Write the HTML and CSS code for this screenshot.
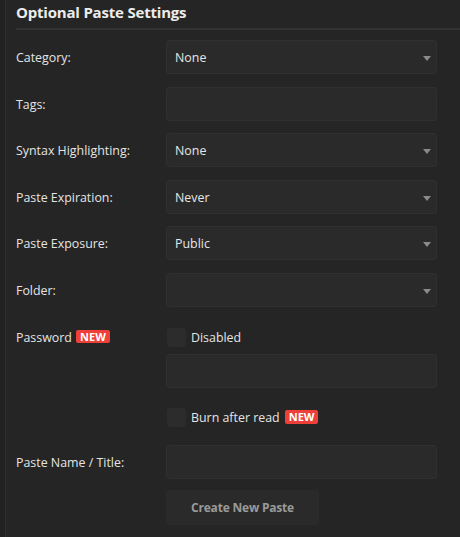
FILE: index.html
```html
<!DOCTYPE html>
<html>
<head>
<meta charset="utf-8">
<link rel="stylesheet" href="styles.css">
</head>
<body>
<div class="panel">
  <h2 class="title">Optional Paste Settings</h2>
  <div class="form">
    <div class="row">
      <label class="label">Category:</label>
      <div class="control select">None<span class="caret"></span></div>
    </div>
    <div class="row">
      <label class="label">Tags:</label>
      <div class="control"></div>
    </div>
    <div class="row">
      <label class="label">Syntax Highlighting:</label>
      <div class="control select">None<span class="caret"></span></div>
    </div>
    <div class="row">
      <label class="label">Paste Expiration:</label>
      <div class="control select">Never<span class="caret"></span></div>
    </div>
    <div class="row">
      <label class="label">Paste Exposure:</label>
      <div class="control select">Public<span class="caret"></span></div>
    </div>
    <div class="row">
      <label class="label">Folder:</label>
      <div class="control select"><span class="caret"></span></div>
    </div>
    <div class="row row-pw">
      <label class="label label-top">Password <span class="badge">NEW</span></label>
      <div class="stack">
        <div class="check"><span class="box"></span>Disabled</div>
        <div class="control pw"></div>
        <div class="check burn"><span class="box"></span>Burn after read<span class="badge">NEW</span></div>
      </div>
    </div>
    <div class="row row-name">
      <label class="label">Paste Name / Title:</label>
      <div class="control"></div>
    </div>
    <div class="row row-btn">
      <span></span>
      <button class="btn">Create New Paste</button>
    </div>
  </div>
</div>
</body>
</html>
```
FILE: styles.css
```css
html, body {
  margin: 0;
  padding: 0;
  height: 100%;
}
html { background: #222222; }
body {
  font-family: "Open Sans", "Noto Sans", sans-serif;
  font-size: 12.4px;
  color: #e4e4e4;
}
.panel {
  margin-left: 5px;
  border-left: 1px solid #2f2f2f;
  min-height: 537px;
  box-sizing: border-box;
  padding-left: 10px;
  background: #252525;
}
.title {
  margin: 0;
  padding: 1px 0 0 0;
  height: 27px;
  font-size: 15px;
  font-weight: 700;
  letter-spacing: -0.2px;
  color: #ececec;
  border-bottom: 2px solid #333333;
  line-height: 22px;
}
.form {
  padding-top: 10px;
  padding-right: 23px;
}
.row {
  display: grid;
  grid-template-columns: 150px 271px;
  align-items: center;
  margin-bottom: 12.5px;
}
.label {
  color: #e4e4e4;
  white-space: nowrap;
  padding-top: 1px;
}
.control {
  position: relative;
  height: 34px;
  box-sizing: border-box;
  border: 1px solid #303030;
  border-radius: 3px;
  background: #2a2a2a;
  padding-left: 8px;
  line-height: 33px;
  color: #e6e6e6;
}
.caret {
  position: absolute;
  right: 5px;
  top: 15px;
  width: 0;
  height: 0;
  border-left: 4px solid transparent;
  border-right: 4px solid transparent;
  border-top: 5px solid #8a8a8a;
}
.row-pw {
  align-items: start;
  margin-top: 21px;
}
.label-top {
  padding-top: 1px;
}
.badge {
  display: inline-block;
  background: #ee3f38;
  color: #ffffff;
  font-weight: 700;
  font-size: 11px;
  line-height: 13px;
  padding: 0 4px;
  border-radius: 2px;
  vertical-align: 1px;
  margin-left: 1px;
}
.stack {
  display: flex;
  flex-direction: column;
}
.check {
  display: flex;
  align-items: center;
  height: 19px;
  margin-left: 1px;
  color: #e4e4e4;
}
.check .box {
  width: 19px;
  height: 19px;
  background: #2c2c2c;
  border-radius: 3px;
  margin-right: 5px;
  flex: none;
}
.check .badge {
  margin-left: 5px;
  line-height: 14px;
  vertical-align: 0;
}
.pw {
  margin-top: 7px;
}
.burn {
  margin-top: 20px;
}
.row-name {
  margin-top: 18px;
  margin-bottom: 11px;
}
.btn {
  width: 153px;
  height: 35px;
  background: #2a2a2a;
  border: none;
  border-radius: 3px;
  color: #9a9a9a;
  font-family: "Open Sans", "Noto Sans", sans-serif;
  font-size: 12px;
  font-weight: 700;
  letter-spacing: -0.2px;
  padding: 0;
}
```
